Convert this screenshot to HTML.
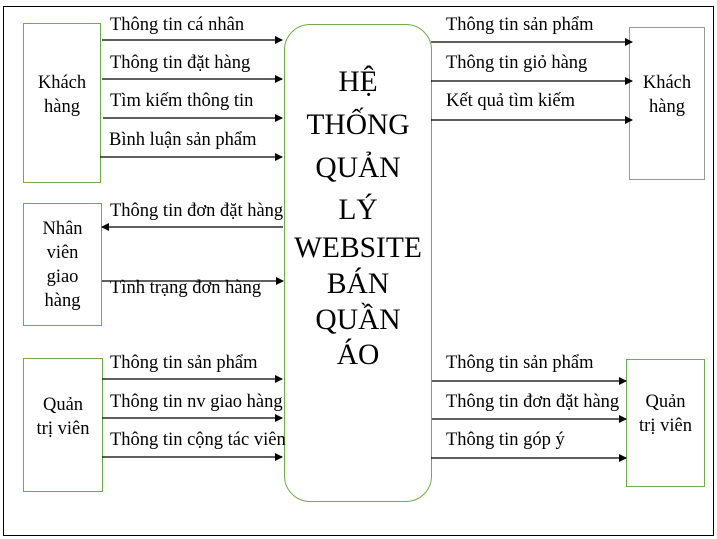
<!DOCTYPE html>
<html><head><meta charset="utf-8"><style>
body{margin:0;width:717px;height:539px;background:#fff;position:relative;overflow:hidden;font-family:"Liberation Serif",serif;font-size:18.5px;color:#000}
div{position:absolute}
.b{border:1.3px solid #70ad47;box-sizing:border-box;display:flex;align-items:center;justify-content:center;text-align:center;line-height:24px}
.t{white-space:nowrap;line-height:18px}
.h{left:284px;width:148px;text-align:center;font-size:29.5px;line-height:34px;white-space:nowrap}
</style></head><body>
<div style="left:3px;top:6px;width:711px;height:530px;border:1.5px solid #000;box-sizing:border-box"></div>
<div class="b" style="left:23px;top:23px;width:78px;height:160px;align-items:flex-start;padding-top:47px">Khách<br>hàng</div>
<div class="b" style="left:23px;top:203px;width:79px;height:123px">Nhân<br>viên<br>giao<br>hàng</div>
<div class="b" style="left:23px;top:358px;width:80px;height:134px;align-items:flex-start;padding-top:34px">Quản<br>trị viên</div>
<div class="b" style="left:629px;top:27px;width:76px;height:153px;border-color:#999;align-items:flex-start;padding-top:43px">Khách<br>hàng</div>
<div class="b" style="left:626px;top:359px;width:79px;height:128px;align-items:flex-start;padding-top:30px">Quản<br>trị viên</div>
<div class="b" style="left:284px;top:24px;width:148px;height:478px;border-radius:26px"></div>
<div class="h" style="top:65px">HỆ</div>
<div class="h" style="top:108px">THỐNG</div>
<div class="h" style="top:151px">QUẢN</div>
<div class="h" style="top:193px">LÝ</div>
<div class="h" style="top:231px">WEBSITE</div>
<div class="h" style="top:267px">BÁN</div>
<div class="h" style="top:303px">QUẦN</div>
<div class="h" style="top:338px">ÁO</div>
<svg style="position:absolute;left:0;top:0" width="717" height="539">
<defs><marker id="a" markerWidth="8" markerHeight="8" refX="7" refY="4" orient="auto" markerUnits="userSpaceOnUse"><path d="M0,0L8,4L0,8z" fill="#000"/></marker></defs>
<g stroke="#000" stroke-width="1.2" marker-end="url(#a)">
<line x1="102" y1="40" x2="282" y2="40"/><line x1="102" y1="79" x2="282" y2="79"/>
<line x1="103" y1="118" x2="282" y2="118"/><line x1="100" y1="157" x2="282" y2="157"/>
<line x1="283" y1="227" x2="102" y2="227"/><line x1="102" y1="281" x2="283" y2="281"/>
<line x1="102" y1="379" x2="282" y2="379"/><line x1="102" y1="418" x2="282" y2="418"/>
<line x1="102" y1="457" x2="282" y2="457"/>
<line x1="431" y1="42" x2="632" y2="42"/><line x1="431" y1="81" x2="632" y2="81"/>
<line x1="431" y1="120" x2="632" y2="120"/>
<line x1="432" y1="381" x2="626" y2="381"/><line x1="432" y1="419" x2="626" y2="419"/>
<line x1="431" y1="458" x2="626" y2="458"/>
</g></svg>
<div class="t" style="left:110px;top:16px">Thông tin cá nhân</div>
<div class="t" style="left:110px;top:54px">Thông tin đặt hàng</div>
<div class="t" style="left:110px;top:92px">Tìm kiếm thông tin</div>
<div class="t" style="left:109px;top:131px">Bình luận sản phẩm</div>
<div class="t" style="left:110px;top:202px">Thông tin đơn đặt hàng</div>
<div class="t" style="left:110px;top:279px">Tình trạng đơn hàng</div>
<div class="t" style="left:110px;top:354px">Thông tin sản phẩm</div>
<div class="t" style="left:110px;top:393px">Thông tin nv giao hàng</div>
<div class="t" style="left:110px;top:431px">Thông tin cộng tác viên</div>
<div class="t" style="left:446px;top:16px">Thông tin sản phẩm</div>
<div class="t" style="left:446px;top:54px">Thông tin giỏ hàng</div>
<div class="t" style="left:446px;top:92px">Kết quả tìm kiếm</div>
<div class="t" style="left:446px;top:354px">Thông tin sản phẩm</div>
<div class="t" style="left:446px;top:393px">Thông tin đơn đặt hàng</div>
<div class="t" style="left:446px;top:431px">Thông tin góp ý</div>
</body></html>
